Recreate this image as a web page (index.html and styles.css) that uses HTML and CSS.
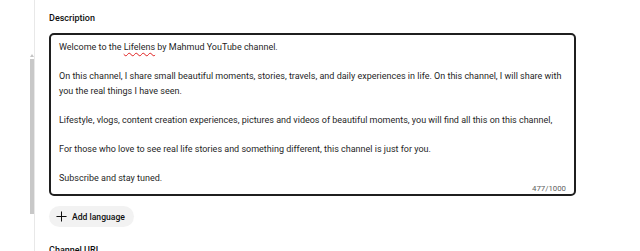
FILE: index.html
```html
<!DOCTYPE html>
<html lang="en">
<head>
    <meta charset="UTF-8" />
    <title>Channel details</title>
    <link rel="stylesheet" href="styles.css">
</head>
<body>

<div class="page">

    <div class="rail">
        <div class="scroll-up"></div>
        <div class="scroll-thumb"></div>
    </div>

    <div class="form">
        <div class="field-label">Description</div>

        <div class="desc-box">
            <div class="desc-text">
                <p>Welcome to the <span class="misspelled">Lifelens</span> by Mahmud YouTube channel.</p>
                <p>On this channel, I share small beautiful moments, stories, travels, and daily experiences in life. On this channel, I will share with you the real things I have seen.</p>
                <p>Lifestyle, vlogs, content creation experiences, pictures and videos of beautiful moments, you will find all this on this channel,</p>
                <p>For those who love to see real life stories and something different, this channel is just for you.</p>
                <p>Subscribe and stay tuned.</p>
            </div>
            <div class="counter">477/1000</div>
        </div>

        <button class="add-lang">
            <svg width="11" height="11" viewBox="0 0 12 12"><path d="M6 0.5v11M0.5 6h11" stroke="#0f0f0f" stroke-width="1.1" fill="none"/></svg>
            <span>Add language</span>
        </button>

        <div class="field-label next">Channel URL</div>
    </div>

</div>

</body>
</html>
```

FILE: styles.css
```css
body {
    margin: 0;
    background: #fff;
    font-family: Roboto, "Liberation Sans", sans-serif;
    color: #0f0f0f;
}
.page {
    display: flex;
    height: 251px;
    overflow: hidden;
}
.rail {
    width: 35px;
    flex-shrink: 0;
    border-right: 1px solid #e8e8e8;
    padding-top: 54px;
    box-sizing: border-box;
}
.scroll-up {
    width: 0;
    height: 0;
    margin-left: 30px;
    border-left: 2px solid transparent;
    border-right: 2px solid transparent;
    border-bottom: 3px solid #c4c4c4;
}
.scroll-thumb {
    width: 4px;
    height: 155px;
    margin: 2px 0 0 30px;
    background: #c8c8c8;
}
.form {
    padding: 11px 0 0 14px;
    width: 527px;
}
.field-label {
    font-size: 9px;
    font-weight: 500;
    line-height: 14px;
    margin-bottom: 8px;
}
.field-label.next {
    margin-top: 16px;
}
.desc-box {
    border: 2px solid #1f1f1f;
    border-radius: 5px;
    padding: 5px 8px 0 8px;
}
.desc-text {
    font-size: 9px;
    line-height: 14.5px;
    color: #1f1f1f;
}
.desc-text p {
    margin: 0 0 14.5px 0;
}
.desc-text p:last-child {
    margin-bottom: 0;
}
.misspelled {
    text-decoration: underline wavy #e02020;
    text-decoration-thickness: 1px;
    text-underline-offset: 2px;
}
.counter {
    text-align: right;
    font-size: 7.8px;
    line-height: 10px;
    color: #606060;
    margin-top: -1px;
}
.add-lang {
    display: flex;
    align-items: center;
    gap: 5px;
    margin-top: 10px;
    height: 21px;
    padding: 0 9px 0 7px;
    border: none;
    border-radius: 11px;
    background: #f2f2f2;
    font-family: Roboto, "Liberation Sans", sans-serif;
    font-size: 8.6px;
    font-weight: 500;
    color: #0f0f0f;
}
```
